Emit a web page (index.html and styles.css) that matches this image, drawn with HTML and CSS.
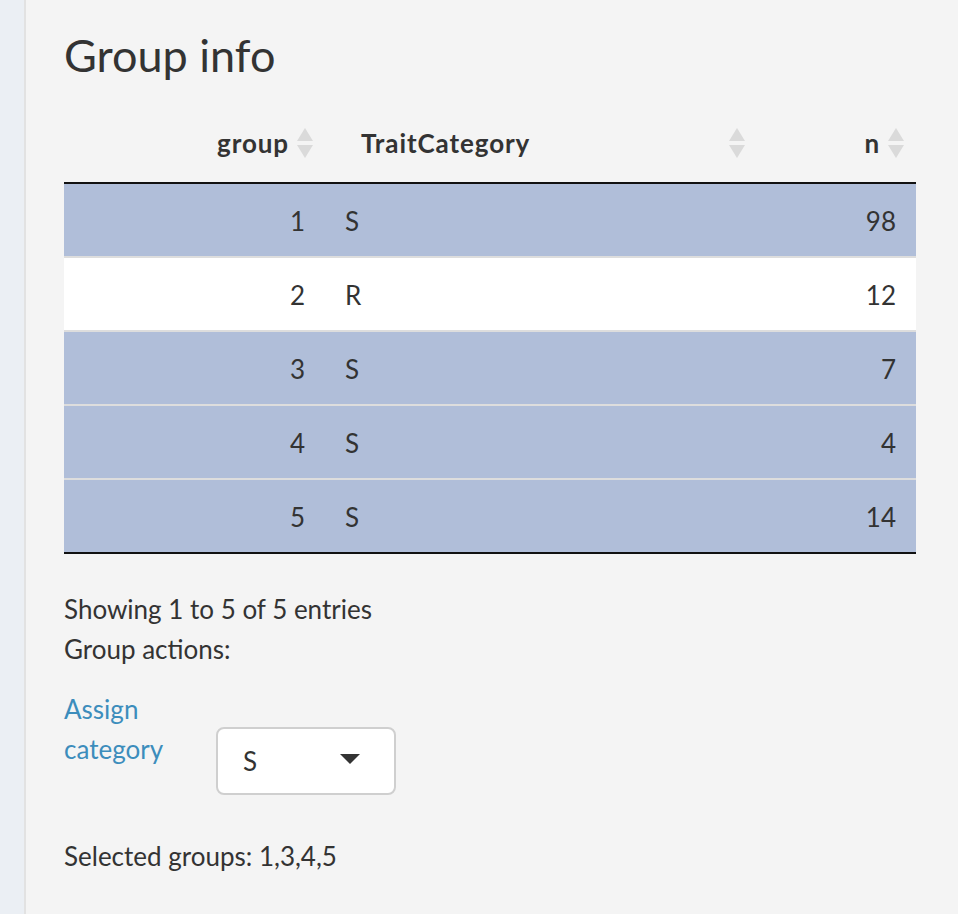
FILE: index.html
```html
<!DOCTYPE html>
<html>
<head>
<meta charset="utf-8">
<link rel="stylesheet" href="styles.css">
</head>
<body>
<div class="layout">
  <div class="side"></div>
  <div class="panel">
    <h2 class="title">Group info</h2>
    <table class="grid">
      <colgroup>
        <col class="c-group"><col class="c-cat"><col class="c-n">
      </colgroup>
      <thead>
        <tr>
          <th class="num">group<span class="sort"></span></th>
          <th class="txt">TraitCategory<span class="sort"></span></th>
          <th class="num">n<span class="sort"></span></th>
        </tr>
      </thead>
      <tbody>
        <tr class="sel"><td class="num">1</td><td>S</td><td class="num">98</td></tr>
        <tr><td class="num">2</td><td>R</td><td class="num">12</td></tr>
        <tr class="sel"><td class="num">3</td><td>S</td><td class="num">7</td></tr>
        <tr class="sel"><td class="num">4</td><td>S</td><td class="num">4</td></tr>
        <tr class="sel last"><td class="num">5</td><td>S</td><td class="num">14</td></tr>
      </tbody>
    </table>
    <div class="info">Showing 1 to 5 of 5 entries</div>
    <div class="info">Group actions:</div>
    <div class="assign">
      <a class="link" href="#">Assign<br>category</a>
      <div class="select"><span>S</span><span class="caret"></span></div>
    </div>
    <div class="selected">Selected groups: 1,3,4,5</div>
  </div>
</div>
</body>
</html>
```
FILE: styles.css
```css
html, body {
  margin: 0;
  padding: 0;
  height: 100%;
}
body {
  font-family: Lato, "Noto Sans", sans-serif;
  font-size: 26px;
  color: #333;
  background: #f4f4f4;
}
.layout {
  display: flex;
  min-height: 914px;
}
.side {
  width: 24px;
  flex: 0 0 24px;
  background: #ebeff4;
  border-right: 2px solid #e2e2e2;
}
.panel {
  flex: 1;
  padding: 0 42px 0 38px;
  background: #f4f4f4;
}
.title {
  margin: 25px 0 0;
  font-weight: 400;
  font-size: 45px;
  line-height: 60px;
  color: #333;
}
.grid {
  margin-top: 23px;
  width: 852px;
  border-collapse: collapse;
  table-layout: fixed;
}
.c-group { width: 261px; }
.c-cat { width: 432px; }
.c-n { width: 159px; }
.grid th {
  position: relative;
  font-weight: 700;
  letter-spacing: 0.9px;
  padding: 18px 36px 22px;
  line-height: 34px;
  height: 34px;
  border-bottom: 2px solid #111;
  text-align: left;
}
.grid th.num { text-align: right; }
.grid td {
  padding: 2px 20px 0;
  height: 70px;
  line-height: 34px;
  border-bottom: 2px solid #dddddd;
  background: #fff;
}
.grid tr.sel td { background: #b0bed9; }
.grid tr.last td { border-bottom: 2px solid #111; }
.grid td.num { text-align: right; }
.sort {
  position: absolute;
  right: 12px;
  top: 50%;
  width: 16px;
  height: 30px;
  margin-top: -17px;
}
.sort::before, .sort::after {
  content: "";
  position: absolute;
  left: 0;
  border-left: 8px solid transparent;
  border-right: 8px solid transparent;
}
.sort::before {
  top: 0;
  border-bottom: 13px solid #dadada;
}
.sort::after {
  bottom: 0;
  border-top: 13px solid #dadada;
}
.info {
  line-height: 40px;
}
.grid + .info { margin-top: 35px; }
.assign {
  display: flex;
  align-items: flex-start;
  margin-top: 20px;
}
.link {
  display: block;
  width: 152px;
  line-height: 40px;
  color: #3c8dbc;
  text-decoration: none;
}
.select {
  margin-top: 38px;
  box-sizing: border-box;
  width: 180px;
  height: 68px;
  background: #fff;
  border: 2px solid #cfcfcf;
  border-radius: 8px;
  display: flex;
  align-items: center;
  justify-content: space-between;
  padding: 0 34px 0 25px;
}
.caret {
  width: 0;
  height: 0;
  border-left: 10px solid transparent;
  border-right: 10px solid transparent;
  border-top: 10px solid #333;
  margin-top: -4px;
}
.selected {
  margin-top: 41px;
  line-height: 40px;
}
```
